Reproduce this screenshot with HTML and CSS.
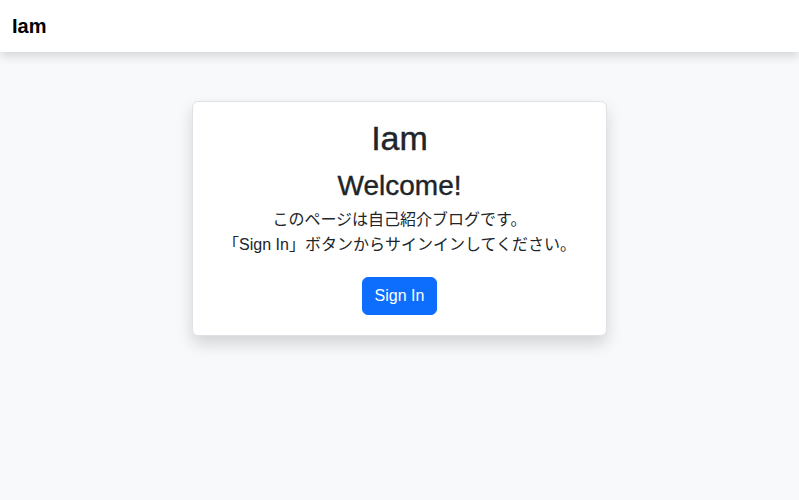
FILE: index.html
```html
<!DOCTYPE html>
<html lang="ja">
<head>
<meta charset="utf-8">
<title>Iam</title>
<link rel="stylesheet" href="styles.css">
</head>
<body>
<header class="navbar">
  <span class="brand">Iam</span>
</header>
<main class="main">
  <div class="card">
    <h1 class="card-title">Iam</h1>
    <h2 class="card-subtitle">Welcome!</h2>
    <p class="card-text">このページは自己紹介ブログです。<br>「Sign In」ボタンからサインインしてください。</p>
    <button class="btn" type="button">Sign In</button>
  </div>
</main>
</body>
</html>
```
FILE: styles.css
```css
* { box-sizing: border-box; }
html, body { margin: 0; height: 100%; }
body {
  background: #f8f9fa;
  color: #212529;
  font-family: "Liberation Sans", Arial, "Noto Sans CJK JP", sans-serif;
  font-size: 16px;
  line-height: 1.5;
}
.navbar {
  height: 52px;
  background: #fff;
  display: flex;
  align-items: center;
  padding: 0 12px;
  box-shadow: 0 4px 10px rgba(0,0,0,0.15);
  position: relative;
}
.brand {
  font-weight: 700;
  font-size: 20px;
  color: #000;
}
.main {
  display: flex;
  justify-content: center;
  padding-top: 49px;
}
.card {
  width: 415px;
  background: #fff;
  border: 1px solid #dee2e6;
  border-radius: 6px;
  box-shadow: 0 8px 16px rgba(0,0,0,0.15);
  padding: 16px 16px 20px;
  display: flex;
  flex-direction: column;
  align-items: center;
  text-align: center;
}
.card-title {
  margin: 0 0 10px;
  font-size: 34px;
  font-weight: 500;
  line-height: 1.2;
  -webkit-text-stroke: 0.4px #212529;
}
.card-subtitle {
  margin: 0 0 5px;
  font-size: 28px;
  font-weight: 500;
  line-height: 1.2;
  -webkit-text-stroke: 0.4px #212529;
}
.card-text {
  margin: 0 0 20px;
  font-size: 16px;
  line-height: 25px;
}
.btn {
  font-family: inherit;
  font-size: 16px;
  line-height: 24px;
  color: #fff;
  background: #0d6efd;
  border: 1px solid #0d6efd;
  border-radius: 6px;
  padding: 6px 12px;
  cursor: pointer;
}
```
